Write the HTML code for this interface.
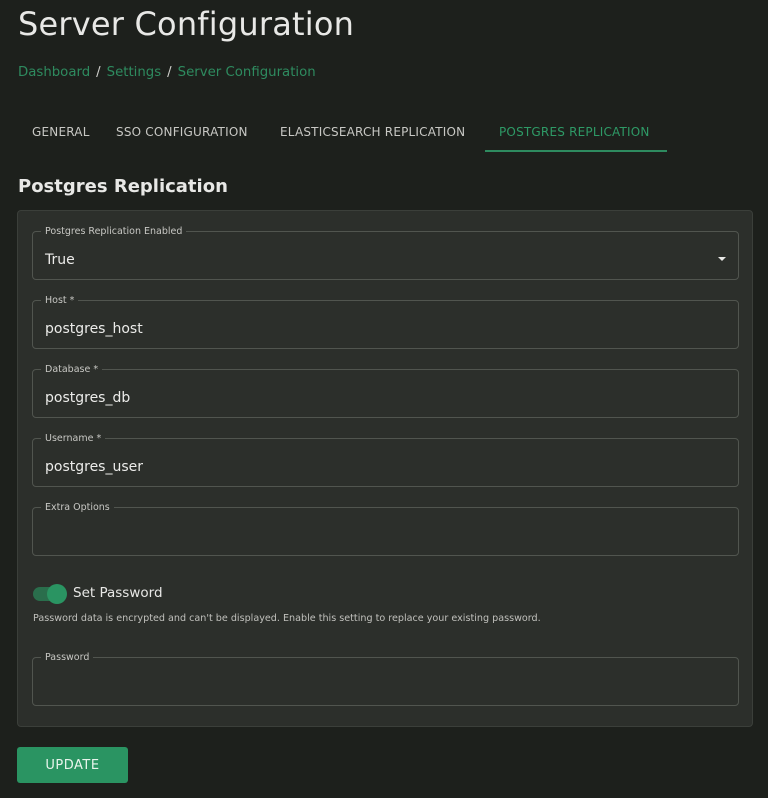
<!DOCTYPE html>
<html><head><meta charset="utf-8"><style>
*{box-sizing:border-box;margin:0;padding:0}
body{width:768px;height:798px;background:#1d201c;font-family:"DejaVu Sans","Liberation Sans",sans-serif;color:#e8e8e6;position:relative;overflow:hidden}
.a{position:absolute;white-space:nowrap}
h1{position:absolute;left:18px;top:5px;font-size:32px;font-weight:400;letter-spacing:0.2px}
.bc{left:18px;top:65px;font-size:13.3px;color:#2e8b5f}
.bc span{color:#d0d0cc;margin:0 6px}
.tab{top:125px;font-size:12px;color:#c8c8c4;letter-spacing:0.2px}
.ul{left:485px;top:150px;width:182px;height:2px;background:#2e8b5f}
h2{position:absolute;left:18px;top:176px;font-size:18px;font-weight:700}
.paper{left:17px;top:210px;width:736px;height:517px;background:#2c2f2b;border:1px solid #3b3f3a;border-radius:4px}
fieldset{position:absolute;left:32px;width:707px;height:50px;border:1px solid #51554f;border-radius:4px;padding:0 8px}
legend{font-size:9.5px;color:#c8c8c4;padding:0 4px;margin-left:0}
.v{position:absolute;left:12px;top:15px;font-size:14px;color:#ececea}
.btn{left:17px;top:747px;width:111px;height:36px;background:#2a9462;border-radius:3px;color:#e8f4ec;font-size:13px;text-align:center;line-height:38px;letter-spacing:0.5px}
</style></head><body>
<h1>Server Configuration</h1>
<div class="a bc">Dashboard<span>/</span>Settings<span>/</span>Server Configuration</div>
<div class="a tab" style="left:32px">GENERAL</div>
<div class="a tab" style="left:116px">SSO CONFIGURATION</div>
<div class="a tab" style="left:280px">ELASTICSEARCH REPLICATION</div>
<div class="a tab" style="left:499px;color:#2e9a66">POSTGRES REPLICATION</div>
<div class="a ul"></div>
<h2>Postgres Replication</h2>
<div class="a paper"></div>
<fieldset style="top:226px;height:54px"><legend>Postgres Replication Enabled</legend><div class="v">True</div>
<div style="position:absolute;right:12px;top:20px;width:0;height:0;border-left:4px solid transparent;border-right:4px solid transparent;border-top:4px solid #e8e8e6"></div></fieldset>
<fieldset style="top:295px;height:54px"><legend>Host *</legend><div class="v">postgres_host</div></fieldset>
<fieldset style="top:364px;height:54px"><legend>Database *</legend><div class="v">postgres_db</div></fieldset>
<fieldset style="top:433px;height:54px"><legend>Username *</legend><div class="v">postgres_user</div></fieldset>
<fieldset style="top:502px;height:54px"><legend>Extra Options</legend></fieldset>
<div class="a" style="left:33px;top:587px;width:32px;height:14px;border-radius:7px;background:#2a6e4c"></div>
<div class="a" style="left:47px;top:584px;width:20px;height:20px;border-radius:50%;background:#2a9462"></div>
<div class="a" style="left:73px;top:585px;font-size:13.5px">Set Password</div>
<div class="a" style="left:33px;top:613px;font-size:9.6px;color:#c0c0bc">Password data is encrypted and can't be displayed. Enable this setting to replace your existing password.</div>
<fieldset style="top:652px;height:54px"><legend>Password</legend></fieldset>
<div class="a btn">UPDATE</div>
</body></html>
